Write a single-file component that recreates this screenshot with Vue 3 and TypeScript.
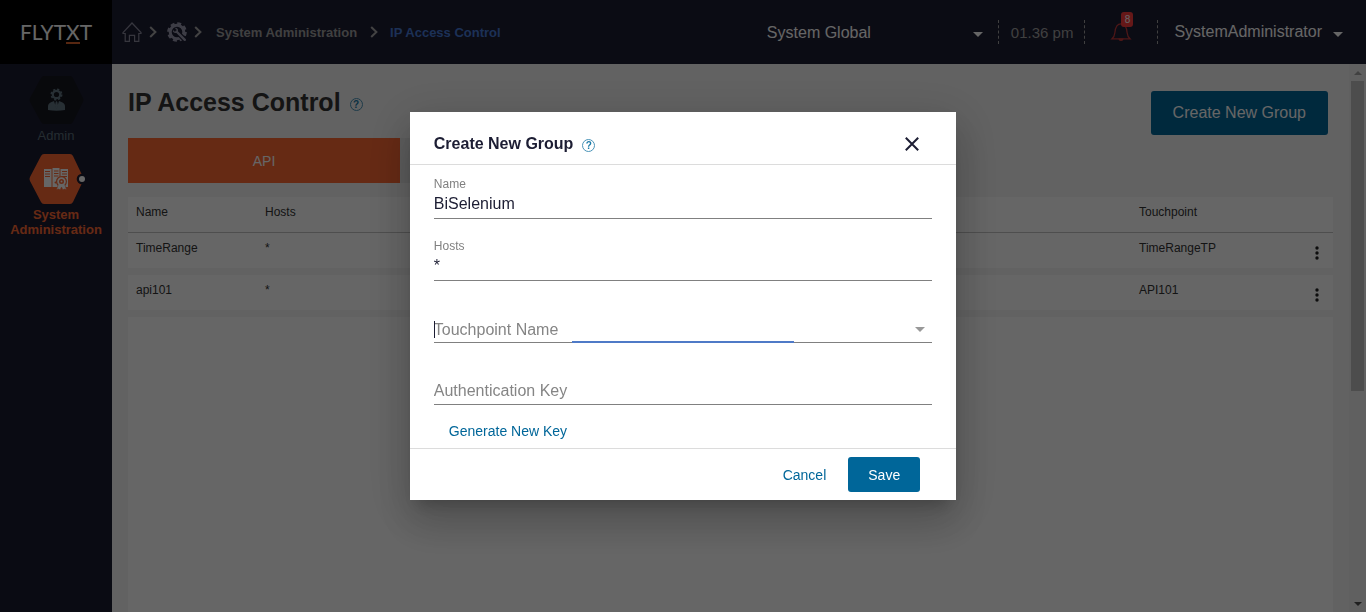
<script setup lang="ts">
import { ref } from 'vue'

interface AccessGroup {
  name: string
  hosts: string
  touchpoint: string
}

const groups: AccessGroup[] = [
  { name: 'TimeRange', hosts: '*', touchpoint: 'TimeRangeTP' },
  { name: 'api101', hosts: '*', touchpoint: 'API101' },
]

const groupName = ref('BiSelenium')
const hosts = ref('*')
const touchpoint = ref('')
const authKey = ref('')
const scope = ref('System Global')
</script>

<template>
  <div class="app">
    <header class="topbar">
      <a class="logo" href="#" aria-label="FLYTXT">FLYT<span class="logo-x">X</span>T</a>

      <nav class="crumbs" aria-label="Breadcrumb">
        <a href="#" aria-label="Home" class="crumb-icon">
          <svg width="20" height="20" viewBox="0 0 20 20" fill="none" stroke="#8a8a9c" stroke-width="1.2">
            <path d="M1 10.6 10 1l9 9.6v.9h-2.2v7.9h-4.2v-6.100H7.400v6.100H3.200v-7.900H1z" />
          </svg>
        </a>
        <svg class="chevron" width="8" height="12" viewBox="0 0 8 12"><path d="M1.200 1 6.400 6l-5.200 5" /></svg>
        <a href="#" aria-label="Settings" class="crumb-icon">
          <svg width="20" height="20" viewBox="0 0 20 20" fill="none">
            <circle cx="10" cy="10" r="8.600" stroke="#9a9aae" stroke-width="2.400" stroke-dasharray="3.950 2.800" />
            <circle cx="10" cy="10" r="6.800" stroke="#9a9aae" stroke-width="3" />
            <path d="m11 11 7.500 7.500" stroke="#1d1e34" stroke-width="4.600" />
            <path d="m9.500 9.500 8.300 8.300" stroke="#9a9aae" stroke-width="2.400" stroke-linecap="round" />
            <path d="M8.400 6.400a2 2 0 1 1-2 2" stroke="#9a9aae" stroke-width="1.200" />
          </svg>
        </a>
        <svg class="chevron" width="8" height="12" viewBox="0 0 8 12"><path d="M1.200 1 6.400 6l-5.200 5" /></svg>
        <a class="crumb crumb-parent" href="#">System Administration</a>
        <svg class="chevron" width="8" height="12" viewBox="0 0 8 12"><path d="M1.200 1 6.400 6l-5.200 5" /></svg>
        <a class="crumb current" href="#" aria-current="page">IP Access Control</a>
      </nav>

      <div class="tools">
        <div class="scope">
          <select v-model="scope" aria-label="Scope">
            <option>System Global</option>
          </select>
          <span class="caret"></span>
        </div>
        <div class="tool clock">01.36 pm</div>
        <div class="tool alerts">
          <button type="button" class="bell" aria-label="Notifications">
            <svg width="20" height="20" viewBox="0 0 20 20" fill="none" stroke="#c43a3a" stroke-width="1.2">
              <path d="M1 16.800c1.800-1.500 2.600-3.400 2.900-6.200C4.300 5.800 5.600 1.800 10 1.800s5.700 4 6.100 8.800c.3 2.800 1.100 4.700 2.900 6.200z" />
              <path d="M8.200 17.200a1.900 1.900 0 0 0 3.600 0z" fill="#c43a3a" />
            </svg>
            <span class="badge">8</span>
          </button>
        </div>
        <button type="button" class="tool user">SystemAdministrator <span class="caret"></span></button>
      </div>
    </header>

    <div class="body">
      <nav class="sidebar" aria-label="Modules">
        <a class="module" href="#">
          <svg width="56" height="50" viewBox="0 0 56 50">
            <path d="M16 1h26q2 0 3 2l10 20q1 2 0 4L45 47q-1 2-3 2H16q-2 0-3-2L2 27q-1-2 0-4L13 3q1-2 3-2z" fill="#15171f" />
            <g fill="none" stroke="#627682">
              <circle cx="28.500" cy="19.500" r="5.200" stroke-width="1.600" stroke-dasharray="2.200 1.880" />
              <circle cx="28.500" cy="19.500" r="3.700" stroke-width="2.200" />
            </g>
            <path d="M20 35v-3.500q0-3 3-4.200l3-1.300 2.500 8 2.500-8 3 1.300q3 1.200 3 4.200V35q-8.500 1.500-17 0z" fill="#627682" />
            <path d="m27.600 27 .9-1 .9 1 .7 4-1.600 3.500-1.600-3.500z" fill="#627682" />
          </svg>
          <span>Admin</span>
        </a>
        <a class="module active" href="#" aria-current="true">
          <svg width="56" height="50" viewBox="0 0 56 50">
            <path d="M16 0h26q2 0 3 2l10 21q1 2 0 4L45 48q-1 2-3 2H16q-2 0-3-2L2 27q-1-2 0-4L13 2q1-2 3-2z" fill="#ff6934" />
            <path d="M16 15h7.500v18H16zM24.500 14h7v19h-7zM32.500 15H40v18h-7.500z" fill="#fff" />
            <path d="M17 17.500h5M17 20h5M17 22.500h5M26 17h4.500M26 19.500h4.500M26 22h4.500M34 17.500h5M34 20h5M34 22.500h5" stroke="#ff6934" />
            <circle cx="33.500" cy="27.500" r="5.500" fill="#ff6934" />
            <path d="m30.500 30-2 5.500 2.500-.5 1 1 1.500-3 1.500 3 1-1 2.500.5-2-5.500z" fill="#fff" stroke="#ff6934" stroke-width=".5" />
            <circle cx="33.500" cy="27.500" r="3.400" fill="none" stroke="#fff" stroke-width="1.800" />
            <circle cx="33.500" cy="27.500" r="1" fill="#fff" />
            <circle cx="27.500" cy="28.500" r="1" fill="#ff6934" />
            <circle cx="54" cy="25" r="5.300" fill="#1b1c31" />
            <circle cx="54" cy="25" r="3" fill="#fff" />
          </svg>
          <span>System Administration</span>
        </a>
      </nav>

      <main class="content">
        <div class="page">
          <div class="page-head">
            <h1>IP Access Control</h1>
            <button type="button" class="help" aria-label="Page help">?</button>
            <button type="button" class="primary create">Create New Group</button>
          </div>

          <div class="tabs" role="tablist">
            <button type="button" role="tab" aria-selected="true" class="tab">API</button>
          </div>

          <table class="grid">
            <colgroup>
              <col class="col-name" />
              <col />
              <col class="col-touch" />
              <col class="col-menu" />
            </colgroup>
            <thead>
              <tr>
                <th scope="col">Name</th>
                <th scope="col">Hosts</th>
                <th scope="col">Touchpoint</th>
                <td></td>
              </tr>
            </thead>
            <tbody>
              <tr v-for="g in groups" :key="g.name">
                <td>{{ g.name }}</td>
                <td>{{ g.hosts }}</td>
                <td>{{ g.touchpoint }}</td>
                <td class="menu-cell">
                  <button type="button" class="kebab" :aria-label="`Actions for ${g.name}`">
                    <svg width="4" height="14" viewBox="0 0 4 14" fill="#222">
                      <circle cx="2" cy="2" r="1.700" /><circle cx="2" cy="7" r="1.700" /><circle cx="2" cy="12" r="1.700" />
                    </svg>
                  </button>
                </td>
              </tr>
            </tbody>
          </table>
          <div class="filler"></div>
        </div>

        <div class="scroll" aria-hidden="true">
          <span class="arrow up"></span>
          <span class="thumb"></span>
          <span class="arrow down"></span>
        </div>
      </main>
    </div>

    <div class="overlay">
      <form class="dialog" role="dialog" aria-modal="true" aria-labelledby="dialog-title" @submit.prevent>
        <div class="dialog-head">
          <h2 id="dialog-title">Create New Group</h2>
          <button type="button" class="help" aria-label="Group help">?</button>
          <button type="button" class="close" aria-label="Close">
            <svg width="14" height="14" viewBox="0 0 14 14" fill="none" stroke="#1c1d33" stroke-width="2">
              <path d="m.8.8 12.400 12.400M13.200.8.8 13.200" />
            </svg>
          </button>
        </div>

        <div class="dialog-body">
          <div class="field">
            <label for="group-name">Name</label>
            <input id="group-name" v-model="groupName" type="text" />
          </div>
          <div class="field">
            <label for="group-hosts">Hosts</label>
            <input id="group-hosts" v-model="hosts" type="text" />
          </div>
          <div class="field bare focused">
            <select v-model="touchpoint" aria-label="Touchpoint Name">
              <option value="">Touchpoint Name</option>
            </select>
            <span class="caret"></span>
            <span class="text-cursor"></span>
            <span class="ripple"></span>
          </div>
          <div class="field bare">
            <input v-model="authKey" type="text" placeholder="Authentication Key" aria-label="Authentication Key" />
          </div>
          <button type="button" class="link generate">Generate New Key</button>
        </div>

        <div class="dialog-foot">
          <button type="button" class="link">Cancel</button>
          <button type="submit" class="primary save">Save</button>
        </div>
      </form>
    </div>
  </div>
</template>

<style>
body {
  margin: 0;
  overflow: hidden;
}
</style>

<style scoped>
* {
  box-sizing: border-box;
}

.app {
  display: flex;
  flex-direction: column;
  height: 100vh;
  font-family: "Liberation Sans", Arial, sans-serif;
  color: #333;
}

button,
input,
select {
  font: inherit;
  margin: 0;
  padding: 0;
  border: 0;
  background: none;
  outline: none;
}

a {
  text-decoration: none;
}

svg {
  display: block;
  flex: none;
  overflow: visible;
}

.topbar {
  display: flex;
  align-items: center;
  height: 64px;
  flex: none;
  background: #1d1e34;
}

.logo {
  display: flex;
  justify-content: center;
  align-items: center;
  width: 112px;
  height: 64px;
  flex: none;
  background: #000;
  color: #fff;
  font-family: Lato, "Liberation Sans", sans-serif;
  font-size: 21px;
  line-height: 20px;
}

.logo-x {
  padding-top: 2px;
  border-bottom: 2px solid #d9622b;
}

.crumbs {
  display: flex;
  align-items: center;
  padding-left: 10px;
}

.crumb-icon + .chevron {
  margin: 0 10px 0 7px;
}

.chevron {
  fill: none;
  stroke: #a8a8a8;
  stroke-width: 2;
}

.crumb {
  font-size: 13px;
  font-weight: bold;
  white-space: nowrap;
  color: #a0a0a0;
}

.crumb-parent {
  margin: 0 13px 0 4px;
}

.current {
  margin-left: 12px;
  color: #467ad7;
}

.tools {
  display: flex;
  align-items: center;
  margin-left: auto;
  padding-right: 23px;
  font-size: 16px;
  color: #fff;
}

.caret {
  display: inline-block;
  flex: none;
  border: 5px solid transparent;
  border-top-color: currentColor;
  border-bottom: 0;
}

.tools .caret {
  margin-top: 4px;
}

.scope {
  display: flex;
  align-items: center;
  width: 216px;
  margin-right: 15px;
}

.scope select {
  flex: 1;
  appearance: none;
  color: inherit;
}

.tool {
  display: flex;
  align-items: center;
  height: 24px;
  border-left: 1px dashed #a0a0a0;
  white-space: nowrap;
}

.clock {
  padding: 0 11px 0 12px;
  font-size: 15px;
  color: #a0a0a0;
}

.alerts {
  padding: 0 26px;
}

.bell {
  position: relative;
}

.badge {
  position: absolute;
  left: 10px;
  top: -10px;
  width: 12px;
  border-radius: 3px;
  background: #ff3e3e;
  color: #fff;
  font-size: 10px;
  line-height: 15px;
}

.user {
  gap: 11px;
  padding-left: 16px;
  color: #fff;
}

.tools .user {
  border-left: 1px dashed #a0a0a0;
}

.body {
  display: flex;
  flex: 1;
  min-height: 0;
}

.sidebar {
  display: flex;
  flex-direction: column;
  gap: 11px;
  width: 112px;
  flex: none;
  padding-top: 11px;
  background: #1b1c31;
}

.module {
  display: flex;
  flex-direction: column;
  align-items: center;
  gap: 3px;
  font-size: 13px;
  line-height: 15px;
  text-align: center;
  color: #5d707c;
}

.active {
  color: #ff6934;
  font-weight: bold;
}

.content {
  display: flex;
  flex: 1;
  min-width: 0;
  background: #f5f5f5;
}

.page {
  display: flex;
  flex-direction: column;
  flex: 1;
  min-width: 0;
  padding: 27px 16px 0;
}

.page-head {
  display: flex;
  align-items: flex-start;
  padding-right: 5px;
}

h1 {
  margin: 0;
  font-size: 25px;
  line-height: 22px;
}

.help {
  width: 13px;
  height: 13px;
  border: 1px solid #4a94b8;
  border-radius: 50%;
  color: #1a7aa8;
  font-size: 10px;
  font-weight: bold;
  line-height: 11px;
  text-align: center;
}

.page-head .help {
  margin: 7px 0 0 9px;
}

.primary {
  border-radius: 3px;
  background: #006699;
  color: #fff;
}

.create {
  height: 44px;
  margin-left: auto;
  padding: 0 22px;
  font-size: 16px;
}

.tabs {
  display: grid;
  grid-template-columns: 1fr 1fr;
  width: 544px;
  margin: 3px 0 14px;
  background: #e8e8e8;
}

.tab {
  height: 45px;
  background: #ff6934;
  color: #fff;
  font-size: 14px;
}

.grid {
  width: 100%;
  table-layout: fixed;
  border-spacing: 0;
  font-size: 12px;
  line-height: 14px;
}

.col-name {
  width: 129px;
}

.col-touch {
  width: 166px;
}

.col-menu {
  width: 36px;
}

.grid th,
.grid td {
  height: 35px;
  padding: 8px 8px 0;
  background: #fff;
  background-clip: padding-box;
  font-weight: normal;
  text-align: left;
  vertical-align: top;
}

.grid thead th,
.grid thead td {
  height: 36px;
  border-bottom: 1px solid #c4c4c4;
}

.grid tbody td {
  height: 42px;
  border-bottom: 7px solid transparent;
}

.grid .menu-cell {
  padding: 13px 14px 0 0;
}

.kebab {
  display: block;
  margin-left: auto;
}

.filler {
  flex: 1;
  background: #fff;
}

.scroll {
  display: flex;
  flex-direction: column;
  align-items: center;
  width: 17px;
  flex: none;
  padding: 7px 0 6px;
  background: #f1f1f1;
}

.arrow {
  border: 4px solid transparent;
}

.up {
  border-top: 0;
  border-bottom-color: #a3a3a3;
}

.down {
  margin-top: auto;
  border-bottom: 0;
  border-top-color: #505050;
}

.thumb {
  width: 13px;
  height: 58%;
  margin-top: 6px;
  background: #c1c1c1;
}

.overlay {
  position: fixed;
  inset: 0;
  display: grid;
  place-items: center;
  background: rgba(0, 0, 0, 0.6);
}

.dialog {
  width: 40vw;
  background: #fff;
  box-shadow: 0 11px 15px -7px rgba(0, 0, 0, 0.2), 0 24px 38px 3px rgba(0, 0, 0, 0.14),
    0 9px 46px 8px rgba(0, 0, 0, 0.12);
  color: #1c1d33;
}

.dialog-head {
  display: flex;
  align-items: center;
  height: 53px;
  padding: 12px 37px 0 24px;
  border-bottom: 1px solid #dcdcdc;
}

h2 {
  margin: 0;
  font-size: 16px;
  line-height: 18px;
}

.dialog-head .help {
  margin: 2px 0 0 9px;
}

.close {
  margin-left: auto;
}

.dialog-body {
  display: flex;
  flex-direction: column;
  align-items: flex-start;
  gap: 20px;
  padding: 12px 24px 9px;
}

.field {
  position: relative;
  display: flex;
  flex-direction: column;
  width: 100%;
  height: 42px;
  border-bottom: 1px solid #808080;
}

.field label {
  color: #808080;
  font-size: 12px;
  line-height: 14px;
}

.field input,
.field select {
  width: 100%;
  height: 26px;
  appearance: none;
  color: #1c1d33;
  font-size: 16px;
}

.bare {
  justify-content: flex-end;
}

.field.bare select,
.field.bare input::placeholder {
  color: #858585;
}

.bare .caret {
  position: absolute;
  right: 7px;
  bottom: 10px;
  color: #999;
}

.text-cursor {
  position: absolute;
  left: 0;
  bottom: 4px;
  width: 1px;
  height: 17px;
  background: #1c1d33;
}

.ripple {
  position: absolute;
  left: calc(50% - 111px);
  width: 222px;
  bottom: -1px;
  height: 2px;
  background: #4f7ac7;
}

.link {
  color: #006699;
  font-size: 14px;
  line-height: 16px;
}

.generate {
  margin: -2px 0 0 15px;
}

.dialog-foot {
  display: flex;
  align-items: center;
  justify-content: flex-end;
  gap: 22px;
  height: 52px;
  padding-right: 36px;
  border-top: 1px solid #dcdcdc;
}

.save {
  height: 35px;
  padding: 0 20px;
  font-size: 14px;
}
</style>
